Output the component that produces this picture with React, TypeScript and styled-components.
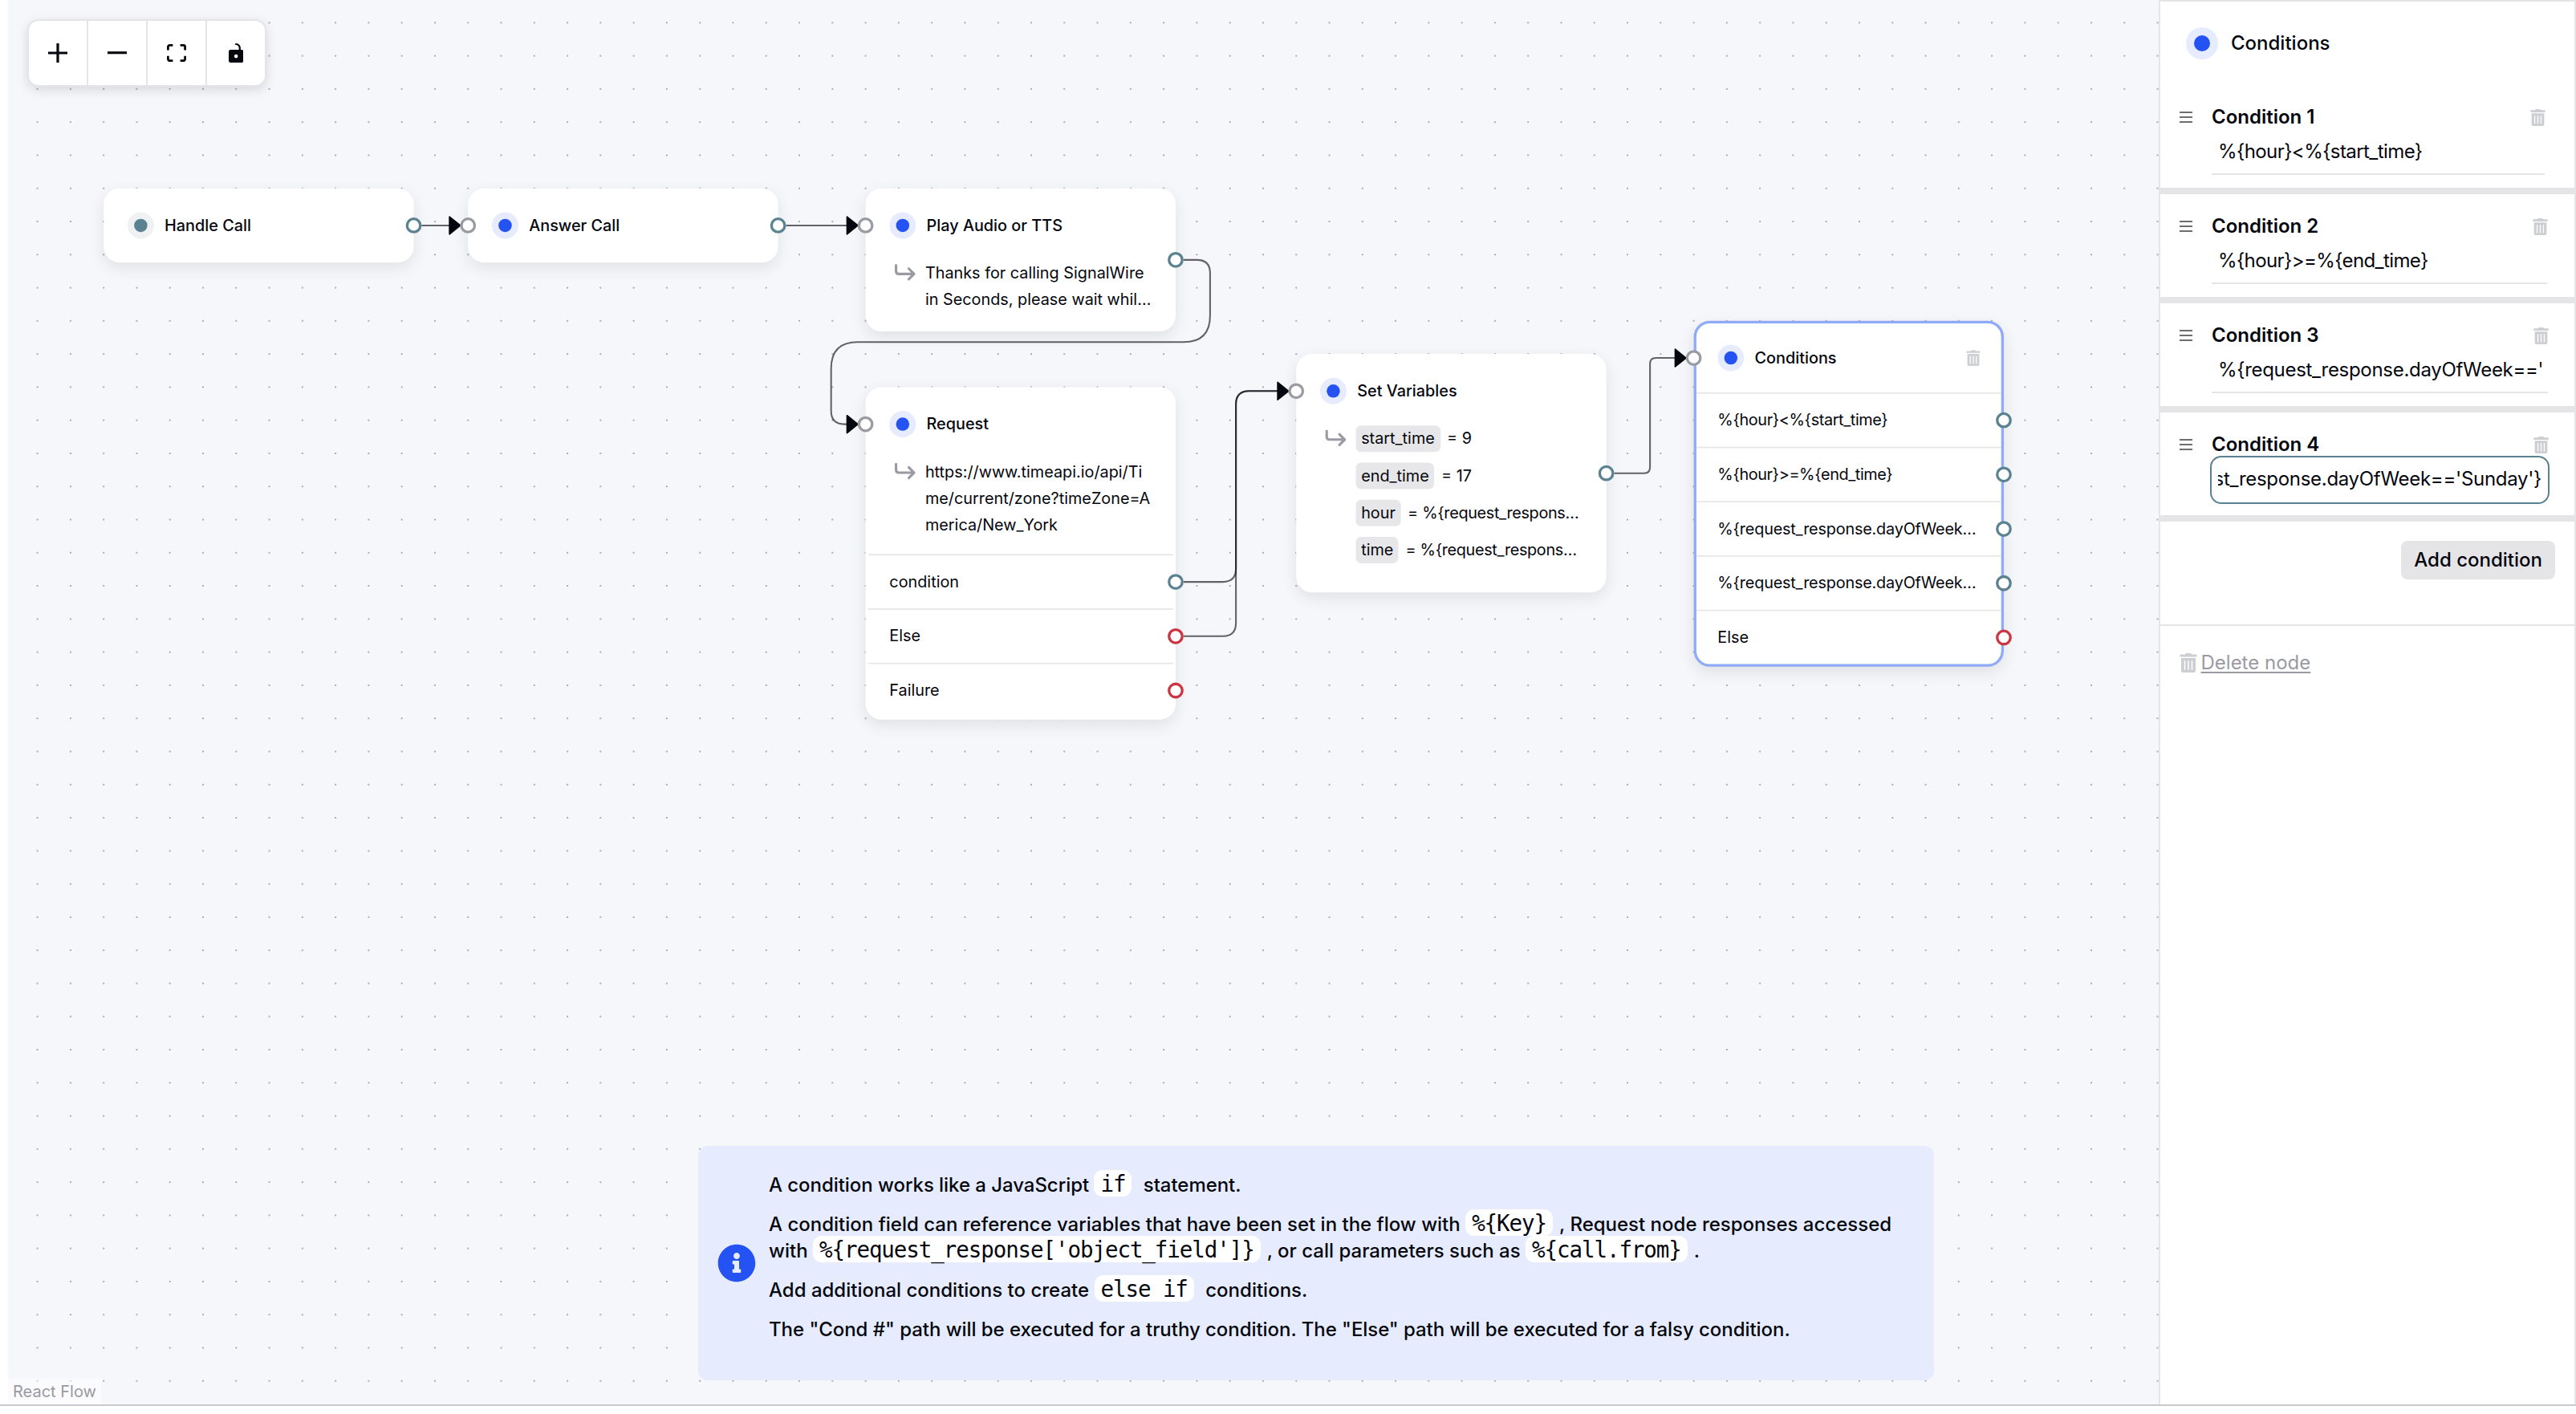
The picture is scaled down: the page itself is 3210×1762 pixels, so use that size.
import React from "react";
import styled, { createGlobalStyle } from "styled-components";
import { FaInfoCircle, FaTrashAlt } from "react-icons/fa";

const ink = "#05070f";
const line = "#e5e5e7";
const blue = "#2552f2";
const teal = "#5b8290";
const red = "#cb3541";
const mute = "#9a9aa2";

const GlobalStyle = createGlobalStyle`
  *, *::before, *::after { box-sizing: border-box; }
  body {
    margin: 0;
    background: #fff;
    color: ${ink};
    font-family: Inter, "Liberation Sans", sans-serif;
    -webkit-font-smoothing: antialiased;
  }
`;

const Page = styled.div`
  width: 3210px;
  height: 1762px;
  overflow: hidden;
  background: #fff;
`;

const Workspace = styled.main`
  display: flex;
  height: 1752px;
  padding-left: 10px;
  border-bottom: 2px solid #c9cad0;
`;

const Canvas = styled.section`
  position: relative;
  flex: 1;
  min-width: 0;
  overflow: hidden;
  background: #f6f7fb;
`;

const Dots = styled.svg`
  position: absolute;
  inset: 0;
  width: 100%;
  height: 100%;
`;

/* Pan and zoom of the flow: everything inside is in flow units. */
const Viewport = styled.div`
  position: absolute;
  left: 0;
  top: 0;
  transform: translate(36.6px, 28.3px) scale(1.6512);
  transform-origin: 0 0;
`;

const Edges = styled.svg`
  position: absolute;
  left: 0;
  top: 0;
  width: 1500px;
  height: 800px;
  overflow: visible;
  fill: none;
`;

const Port = styled.i<{ $x: number; $y: number; $color: string }>`
  position: absolute;
  left: ${(p) => p.$x - 6}px;
  top: ${(p) => p.$y - 6}px;
  width: 12px;
  height: 12px;
  border: 2px solid ${(p) => p.$color};
  border-radius: 50%;
  background: #fff;
`;

const NodeCard = styled.article<{ $x: number; $y: number; $selected?: boolean }>`
  position: absolute;
  left: ${(p) => p.$x}px;
  top: ${(p) => p.$y}px;
  width: 234px;
  border: 2px solid ${(p) => (p.$selected ? "#8fabf7" : "#fff")};
  border-radius: 12px;
  background: #fff;
  box-shadow: 0 4px 12px rgba(0, 0, 0, 0.09);
  font-size: 12px;
  line-height: 20px;
`;

const NodeHead = styled.header`
  display: flex;
  align-items: center;
  gap: 8px;
  height: 52px;
  padding: 0 16px;
  font-weight: 500;

  svg {
    margin: 0 -0.7px 0 auto;
    color: #cfd0d4;
  }
`;

const NodeBody = styled.div`
  display: flex;
  padding: 0 0 12px 19px;
`;

const BodyText = styled.div`
  margin-left: 6px;
  white-space: nowrap;
`;

const VarLine = styled.div`
  display: flex;
  gap: 5.2px;
  height: 20px;
  margin-bottom: 8px;
  white-space: nowrap;
`;

const VarName = styled.span`
  padding: 0 4px;
  border-radius: 4px;
  background: #e7e7e9;
`;

const Tracked = styled.span<{ $track: number }>`
  letter-spacing: ${(p) => p.$track}px;
`;

const NodeRow = styled.div`
  height: 41px;
  padding: 10px 16px 0;
  border-top: 1px solid ${line};
  white-space: nowrap;
`;

const Halo = styled.span<{ $size: number; $tone?: string; $bg?: string }>`
  display: grid;
  place-items: center;
  flex: none;
  width: ${(p) => p.$size}px;
  height: ${(p) => p.$size}px;
  border-radius: 50%;
  background: ${(p) => p.$bg ?? "#e6ecfd"};

  &::before {
    content: "";
    width: 50%;
    height: 50%;
    border-radius: 50%;
    background: ${(p) => p.$tone ?? blue};
  }
`;

const Controls = styled.div`
  position: absolute;
  left: 24px;
  top: 24px;
  display: flex;
  border: 2px solid ${line};
  border-radius: 14px;
  background: #fff;
  box-shadow: 0 4px 14px rgba(0, 0, 0, 0.13);
`;

const ControlButton = styled.button`
  display: grid;
  place-items: center;
  width: 74px;
  height: 80px;
  padding: 0;
  border: 0;
  border-right: 2px solid ${line};
  background: none;
  fill: ${ink};

  &:last-child {
    width: 72px;
    border-right: 0;
  }
`;

const Attribution = styled.a`
  position: absolute;
  left: 0;
  bottom: 0;
  height: 32px;
  padding: 0 6px;
  background: rgba(255, 255, 255, 0.5);
  color: #999aa0;
  font-size: 20px;
  line-height: 32px;
`;

const Hint = styled.aside`
  position: absolute;
  left: 860px;
  top: 1428px;
  display: flex;
  align-items: center;
  gap: 16px;
  width: 1540px;
  height: 292px;
  padding: 0 24px;
  border-radius: 12px;
  background: #e6ecfd;
  font-size: 24px;
  font-weight: 500;
  line-height: 33px;

  > svg {
    flex: none;
    color: ${blue};
  }
`;

const HintLine = styled.p<{ $track?: number }>`
  margin: 0 0 16px;
  letter-spacing: ${(p) => p.$track ?? 0}px;
  white-space: nowrap;
`;

const Code = styled.code`
  margin-right: 8px;
  padding: 0.5px 8px;
  border-radius: 11px;
  background: #fff;
  font: 400 27.5px/1 "DejaVu Sans Mono", monospace;
  letter-spacing: -1.08px;
`;

const Panel = styled.aside`
  display: flex;
  flex-direction: column;
  width: 520px;
  border: 2px solid ${line};
  border-bottom: 0;
  background: #fff;
  font-size: 24px;
  line-height: 32px;
`;

const PanelTitle = styled.h2`
  display: flex;
  align-items: center;
  gap: 16px;
  height: 104px;
  margin: 0;
  padding: 0 32px;
  font-size: 24px;
  font-weight: 500;
`;

const Condition = styled.section<{ $inset: number }>`
  display: grid;
  grid-template-columns: 16px 1fr auto;
  grid-template-rows: 32px 56px;
  column-gap: 24px;
  height: 136px;
  padding: 24px ${(p) => p.$inset}px 0 24px;
  border-bottom: 8px solid ${line};
`;

const ConditionName = styled.h3`
  margin: 0;
  font-size: 24px;
  font-weight: 600;
`;

const Grip = styled.span`
  display: flex;
  flex-direction: column;
  justify-content: center;
  gap: 3.6px;

  i {
    height: 2.3px;
    background: #6d6d72;
  }
`;

const TrashSlot = styled.span`
  display: grid;
  place-items: center;
  margin-right: -1.5px;
  color: #cdced2;
`;

const Field = styled.div<{ $focused?: boolean }>`
  grid-column: 2 / 4;
  display: flex;
  min-width: 0;
  padding: 0 8px;
  line-height: 53px;
  white-space: nowrap;
  border-bottom: 2px solid ${(p) => (p.$focused ? "transparent" : line)};
  border-radius: ${(p) => (p.$focused ? "12px" : "0")};
  box-shadow: ${(p) => (p.$focused ? `0 0 0 2px ${teal}` : "none")};
`;

const FieldClip = styled.div<{ $focused?: boolean }>`
  display: flex;
  justify-content: ${(p) => (p.$focused ? "flex-end" : "flex-start")};
  flex: 1;
  min-width: 0;
  overflow: hidden;
`;

const AddRow = styled.div`
  display: flex;
  justify-content: flex-end;
  height: 130px;
  padding: 24px 24px 0;
  border-bottom: 2px solid ${line};
`;

const AddButton = styled.button`
  height: 48px;
  padding: 0 16px;
  border: 0;
  border-radius: 8px;
  background: ${line};
  color: ${ink};
  font: 500 24px/48px Inter, sans-serif;
`;

const DeleteLink = styled.a`
  display: flex;
  align-items: center;
  gap: 4px;
  margin-top: 30px;
  padding-left: 22.5px;
  color: ${mute};

  svg {
    color: #cdced2;
  }

  span {
    text-decoration: underline;
    text-decoration-thickness: 2px;
    text-underline-offset: 3px;
    text-decoration-skip-ink: none;
  }
`;

const TurnArrow = () => (
  <svg width="18" height="20" viewBox="0 0 18 20" fill="none" stroke={mute} strokeWidth="1.9" strokeLinecap="round" strokeLinejoin="round">
    <path d="M2 4.1V8.5Q2 10.6 4.1 10.6H15.4M11.6 6.6L15.6 10.6L11.6 14.6" />
  </svg>
);

const edgePaths = [
  "M290 153H319",
  "M565 153H619",
  "M865 179H875Q885 179 885 189V221Q885 241 865 241H619Q599 241 599 261V293Q599 303 609 303H619",
  "M865 422H894.5Q904.5 422 904.5 412V288Q904.5 278 914.5 278H944",
  "M865 463H894.5Q904.5 463 904.5 453V288Q904.5 278 914.5 278H944",
  "M1190 340H1212.5Q1217 340 1217 335.5V257.5Q1217 253 1221.5 253H1244",
];

const arrowTips = [
  [319, 153],
  [619, 153],
  [619, 303],
  [944, 278],
  [1244, 253],
];

const ports: [number, number, string][] = [
  [284, 153, teal],
  [325, 153, mute],
  [559, 153, teal],
  [625, 153, mute],
  [859, 179, teal],
  [625, 303, mute],
  [859, 422, teal],
  [859, 463, red],
  [859, 504, red],
  [950, 278, mute],
  [1184, 340, teal],
  [1250, 253, mute],
  [1484, 300, teal],
  [1484, 341, teal],
  [1484, 382, teal],
  [1484, 423, teal],
  [1484, 464, red],
];

const conditions = [
  { name: "Condition 1", value: "%{hour}<%{start_time}", inset: 37, track: -0.57 },
  { name: "Condition 2", value: "%{hour}>=%{end_time}", inset: 34, track: -0.6 },
  { name: "Condition 3", value: "%{request_response.dayOfWeek=='", inset: 33, track: -0.3 },
  { name: "Condition 4", value: "st_response.dayOfWeek=='Sunday'}", inset: 33, track: -0.3, focused: true },
];

const variables: [string, string, number][] = [
  ["start_time", "9", 0],
  ["end_time", "17", 0],
  ["hour", "%{request_respons…", -0.2],
  ["time", "%{request_respons…", -0.2],
];

const conditionRows: [string, number][] = [
  ["%{hour}<%{start_time}", -0.23],
  ["%{hour}>=%{end_time}", -0.24],
  ["%{request_response.dayOfWeek…", -0.11],
  ["%{request_response.dayOfWeek…", -0.11],
];

const Head = ({ title, start }: { title: string; start?: boolean }) => (
  <NodeHead>
    <Halo $size={20} $tone={start ? teal : blue} $bg={start ? "#eff1f3" : undefined} />
    {title}
    {title === "Conditions" && <FaTrashAlt size={12} />}
  </NodeHead>
);

export default function App() {
  return (
    <Page>
      <GlobalStyle />
      <Workspace>
        <Canvas>
          <Dots>
            <defs>
              <pattern id="grid" x="15.96" y="7.66" width="41.28" height="41.28" patternUnits="userSpaceOnUse">
                <circle cx="20.64" cy="20.64" r="1.1" fill="#9a9aa1" />
              </pattern>
            </defs>
            <rect width="100%" height="100%" fill="url(#grid)" />
          </Dots>

          <Viewport>
            <NodeCard $x={50} $y={125}>
              <Head title="Handle Call" start />
            </NodeCard>
            <NodeCard $x={325} $y={125}>
              <Head title="Answer Call" />
            </NodeCard>
            <NodeCard $x={625} $y={125}>
              <Head title="Play Audio or TTS" />
              <NodeBody>
                <TurnArrow />
                <BodyText>
                  Thanks for calling SignalWire
                  <br />
                  in Seconds, please wait whil…
                </BodyText>
              </NodeBody>
            </NodeCard>
            <NodeCard $x={625} $y={275}>
              <Head title="Request" />
              <NodeBody>
                <TurnArrow />
                <BodyText>
                  https://www.timeapi.io/api/Ti
                  <br />
                  me/current/zone?timeZone=A
                  <br />
                  merica/New_York
                </BodyText>
              </NodeBody>
              <NodeRow>condition</NodeRow>
              <NodeRow>Else</NodeRow>
              <NodeRow>Failure</NodeRow>
            </NodeCard>
            <NodeCard $x={950} $y={250}>
              <Head title="Set Variables" />
              <NodeBody>
                <TurnArrow />
                <BodyText>
                  {variables.map(([name, value, track]) => (
                    <VarLine key={name}>
                      <VarName>{name}</VarName>
                      <Tracked $track={track}>= {value}</Tracked>
                    </VarLine>
                  ))}
                </BodyText>
              </NodeBody>
            </NodeCard>
            <NodeCard $x={1250} $y={225} $selected>
              <Head title="Conditions" />
              {conditionRows.map(([text, track], i) => (
                <NodeRow key={i}>
                  <Tracked $track={track}>{text}</Tracked>
                </NodeRow>
              ))}
              <NodeRow>Else</NodeRow>
            </NodeCard>

            <Edges>
              {edgePaths.map((d) => (
                <path key={d} d={d} stroke={ink} strokeOpacity="0.62" strokeWidth="1.25" />
              ))}
              {arrowTips.map(([x, y]) => (
                <path
                  key={`${x}-${y}`}
                  transform={`translate(${x} ${y})`}
                  d="M-8 -6.6L0.2 0L-8 6.6Z"
                  fill={ink}
                  stroke={ink}
                  strokeLinejoin="round"
                />
              ))}
            </Edges>

            {ports.map(([x, y, color]) => (
              <Port key={`${x}-${y}`} $x={x} $y={y} $color={color} />
            ))}
          </Viewport>

          <Controls>
            <ControlButton>
              <svg width="24" height="24" viewBox="0 0 32 32">
                <path d="M32 18.133H18.133V32h-4.266V18.133H0v-4.266h13.867V0h4.266v13.867H32z" />
              </svg>
            </ControlButton>
            <ControlButton>
              <svg width="24" height="4" viewBox="0 0 32 5">
                <path d="M0 0h32v4.2H0z" />
              </svg>
            </ControlButton>
            <ControlButton>
              <svg width="24" height="22.5" viewBox="0 0 32 30">
                <path d="M3.692 4.63c0-.53.4-.938.939-.938h5.215V0H4.708C2.13 0 0 2.054 0 4.63v5.216h3.692V4.631zM27.354 0h-5.2v3.692h5.17c.53 0 .984.4.984.939v5.215H32V4.631A4.624 4.624 0 0027.354 0zm.954 24.83c0 .532-.4.94-.939.94h-5.215v3.768h5.215c2.577 0 4.631-2.13 4.631-4.707v-5.139h-3.692v5.139zm-23.677.94c-.531 0-.939-.4-.939-.94v-5.138H0v5.139c0 2.577 2.13 4.707 4.708 4.707h5.138V25.77H4.631z" />
              </svg>
            </ControlButton>
            <ControlButton>
              <svg width="18.75" height="24" viewBox="0 0 25 32">
                <path d="M21.333 10.667H19.81V7.619C19.81 3.429 16.38 0 12.19 0c-4.114 1.828-1.37 2.133.305 2.438 1.676.305 4.42 2.59 4.42 5.181v3.048H3.047A3.056 3.056 0 000 13.714v15.238A3.056 3.056 0 003.048 32h18.285a3.056 3.056 0 003.048-3.048V13.714a3.056 3.056 0 00-3.048-3.047zM12.19 24.533a3.056 3.056 0 01-3.047-3.047 3.056 3.056 0 013.047-3.048 3.056 3.056 0 013.048 3.048 3.056 3.056 0 01-3.048 3.047z" />
              </svg>
            </ControlButton>
          </Controls>

          <Hint>
            <FaInfoCircle size={48} />
            <div>
              <HintLine $track={-0.05}>
                A condition works like a JavaScript <Code>if</Code> statement.
              </HintLine>
              <HintLine>
                A condition field can reference variables that have been set in the flow with <Code>{"%{Key}"}</Code>, Request node responses accessed
                <br />
                with <Code>{"%{request_response['object_field']}"}</Code>, or call parameters such as <Code>{"%{call.from}"}</Code>.
              </HintLine>
              <HintLine>
                Add additional conditions to create <Code>else if</Code> conditions.
              </HintLine>
              <HintLine $track={-0.05}>
                The "Cond #" path will be executed for a truthy condition. The "Else" path will be executed for a falsy condition.
              </HintLine>
            </div>
          </Hint>

          <Attribution>React Flow</Attribution>
        </Canvas>

        <Panel>
          <PanelTitle>
            <Halo $size={40} />
            Conditions
          </PanelTitle>
          {conditions.map((c) => (
            <Condition key={c.name} $inset={c.inset}>
              <Grip>
                <i />
                <i />
                <i />
              </Grip>
              <ConditionName>{c.name}</ConditionName>
              <TrashSlot>
                <FaTrashAlt size={21} />
              </TrashSlot>
              <Field $focused={c.focused}>
                <FieldClip $focused={c.focused}>
                  <Tracked $track={c.track}>{c.value}</Tracked>
                </FieldClip>
              </Field>
            </Condition>
          ))}
          <AddRow>
            <AddButton>Add condition</AddButton>
          </AddRow>
          <DeleteLink>
            <FaTrashAlt size={24} />
            <span>Delete node</span>
          </DeleteLink>
        </Panel>
      </Workspace>
    </Page>
  );
}
